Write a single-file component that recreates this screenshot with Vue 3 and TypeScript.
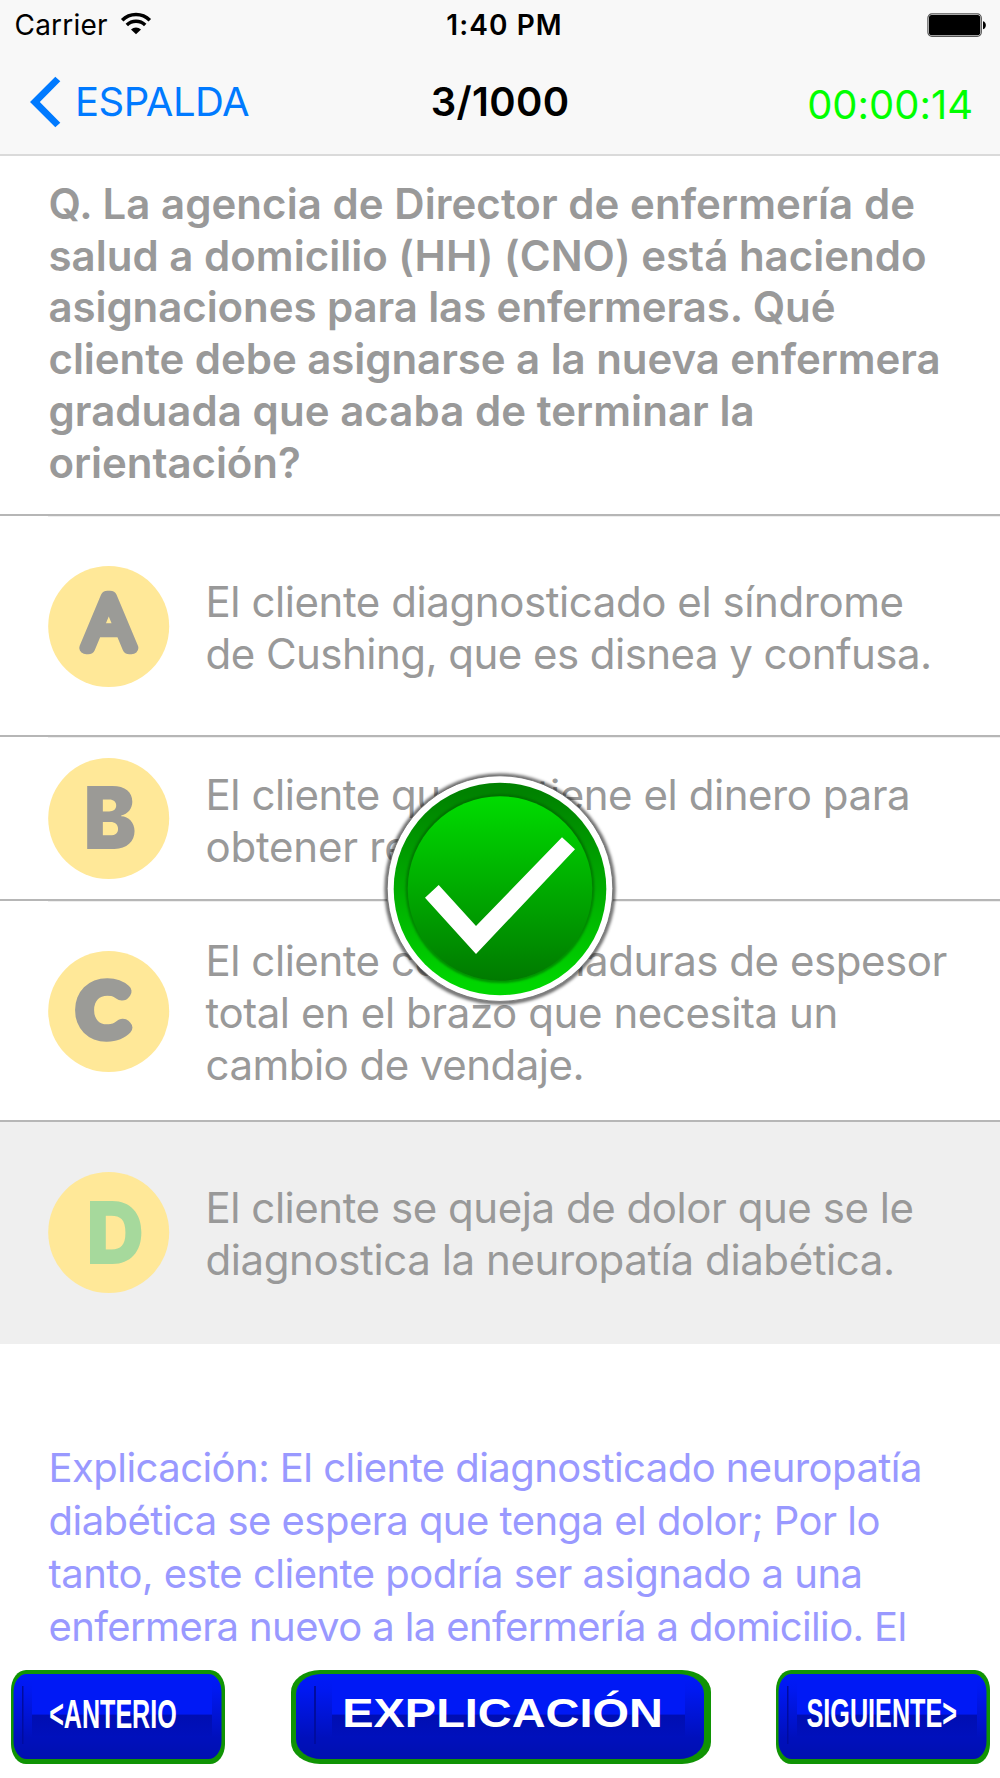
<script setup lang="ts">
import type { Directive } from 'vue'

interface Line {
  text: string
  width: number
}
interface Option {
  letter: string
  lines: Line[]
}

const question: Line[] = [
  { text: 'Q. La agencia de Director de enfermería de', width: 864.5 },
  { text: 'salud a domicilio (HH) (CNO) está haciendo', width: 874.5 },
  { text: 'asignaciones para las enfermeras. Qué', width: 786 },
  { text: 'cliente debe asignarse a la nueva enfermera', width: 889 },
  { text: 'graduada que acaba de terminar la', width: 703 },
  { text: 'orientación?', width: 249.5 },
]

const options: Option[] = [
  {
    letter: 'A',
    lines: [
      { text: 'El cliente diagnosticado el síndrome', width: 694 },
      { text: 'de Cushing, que es disnea y confusa.', width: 721.5 },
    ],
  },
  {
    letter: 'B',
    lines: [
      { text: 'El cliente que no tiene el dinero para', width: 699.5 },
      { text: 'obtener recetas.', width: 317 },
    ],
  },
  {
    letter: 'C',
    lines: [
      { text: 'El cliente con quemaduras de espesor', width: 738 },
      { text: 'total en el brazo que necesita un', width: 630 },
      { text: 'cambio de vendaje.', width: 374 },
    ],
  },
  {
    letter: 'D',
    lines: [
      { text: 'El cliente se queja de dolor que se le', width: 704 },
      { text: 'diagnostica la neuropatía diabética.', width: 684.5 },
    ],
  },
]

const explanation: Line[] = [
  { text: 'Explicación: El cliente diagnosticado neuropatía', width: 868.5 },
  { text: 'diabética se espera que tenga el dolor; Por lo', width: 828 },
  { text: 'tanto, este cliente podría ser asignado a una', width: 812 },
  { text: 'enfermera nuevo a la enfermería a domicilio. El', width: 854 },
]

// Tracks a line of text so that its ink spans the given width.
const vFit: Directive<HTMLElement, number> = {
  mounted(el, { value }) {
    const ctx = document.createElement('canvas').getContext('2d')
    if (!ctx) return
    const s = getComputedStyle(el)
    ctx.font = `${s.fontWeight} ${s.fontSize} ${s.fontFamily}`
    const text = el.textContent ?? ''
    const m = ctx.measureText(text)
    const ink = m.actualBoundingBoxRight + m.actualBoundingBoxLeft
    const spacing = (value - ink) / (text.length - 1)
    el.style.letterSpacing = `${spacing}px`
    el.style.marginRight = `${-spacing}px`
  },
}
</script>

<template>
  <div class="screen">
    <header class="top">
      <div class="status">
        <div class="carrier">
          <span v-fit="91.5">Carrier</span>
          <svg width="30" height="22" viewBox="0 0 30 22">
            <path d="M1.2 7.2A19.5 19.5 0 0 1 28.8 7.2" fill="none" stroke="#000" stroke-width="3.6" />
            <path d="M5.8 12A13 13 0 0 1 24.2 12" fill="none" stroke="#000" stroke-width="3.4" />
            <path d="M15 21.3L10 16.4A7.2 7.2 0 0 1 20 16.4Z" />
          </svg>
        </div>
        <span v-fit="112.5" class="clock">1:40 PM</span>
        <svg class="battery" width="60" height="25" viewBox="0 0 60 25">
          <rect x="0.9" y="0.9" width="53.4" height="22.4" rx="4" fill="#fff" stroke="#555" stroke-width="1.2" />
          <rect x="2" y="2" width="51.2" height="20.2" rx="2.6" />
          <path d="M56 8.2C59.8 9 59.8 15.4 56 16.2Z" />
        </svg>
      </div>
      <nav class="nav">
        <div class="back">
          <svg width="31" height="52" viewBox="0 0 31 52">
            <path d="M25.3 0.7L30.3 5.3L9.8 26L30.3 46.7L25.3 51.3L0 26Z" fill="#007aff" />
          </svg>
          <span v-fit="171">ESPALDA</span>
        </div>
        <span v-fit="135" class="title">3/1000</span>
        <span class="timer"><span v-fit="162">00:00:14</span></span>
      </nav>
    </header>

    <section class="question">
      <div v-for="l in question" :key="l.text" class="line"><span v-fit="l.width">{{ l.text }}</span></div>
    </section>

    <main class="options">
      <div v-for="o in options" :key="o.letter" class="option" :class="'opt-' + o.letter.toLowerCase()">
        <div class="badge">
          <svg width="121" height="121" viewBox="0 0 121 121">
            <circle cx="60.7" cy="60.5" r="60.5" fill="#ffe898" />
            <text v-if="o.letter === 'A'" class="round" text-anchor="middle" transform="translate(60.7 82) scale(1.12 1)">A</text>
            <text v-else-if="o.letter === 'C'" class="round open" text-anchor="middle" transform="translate(54.8 82.5) scale(1.09 1.03)">C</text>
            <text v-else-if="o.letter === 'B'" class="block" transform="translate(35.5 91) scale(.91 1)">B</text>
            <text v-else class="block green" transform="translate(38.3 92) scale(.92 1)">D</text>
          </svg>
        </div>
        <div class="answer">
          <div v-for="l in o.lines" :key="l.text" class="line"><span v-fit="l.width">{{ l.text }}</span></div>
        </div>
      </div>
      <svg class="check" width="240" height="240" viewBox="0 0 240 240">
        <defs>
          <linearGradient id="ring" x1="0" y1="0" x2="0" y2="1">
            <stop offset="0.05" stop-color="#008200" />
            <stop offset="0.95" stop-color="#00d600" />
          </linearGradient>
          <linearGradient id="disc" x1="0" y1="0" x2="0" y2="1">
            <stop offset="0" stop-color="#00dc00" />
            <stop offset="1" stop-color="#007a00" />
          </linearGradient>
          <filter id="soft" x="-10%" y="-10%" width="120%" height="120%">
            <feGaussianBlur stdDeviation="1.6" />
          </filter>
          <filter id="edge" x="-10%" y="-10%" width="120%" height="120%">
            <feGaussianBlur stdDeviation="0.9" />
          </filter>
        </defs>
        <circle cx="120" cy="120" r="113.5" fill="none" stroke="#000" stroke-opacity="0.6" stroke-width="4" filter="url(#soft)" />
        <circle cx="120" cy="119.6" r="112.8" fill="#fff" stroke="#666" stroke-width="0.8" />
        <circle cx="120" cy="120" r="106.3" fill="url(#ring)" />
        <circle cx="120" cy="119.5" r="92.8" fill="none" stroke="#005c00" stroke-opacity="0.6" stroke-width="3" filter="url(#edge)" />
        <circle cx="120" cy="119.5" r="92.2" fill="url(#disc)" />
        <path d="M45 128.7L58.7 116L96 157L182 68.3L195 80.3L96 185Z" fill="#fff" />
      </svg>
    </main>

    <section class="explanation">
      <div v-for="l in explanation" :key="l.text" class="line"><span v-fit="l.width">{{ l.text }}</span></div>
    </section>

    <footer class="actions">
      <svg width="0" height="0" class="defs">
        <linearGradient id="face" x1="0" y1="0" x2="0" y2="1">
          <stop offset="0" stop-color="#001af8" />
          <stop offset="0.2" stop-color="#0018f0" />
          <stop offset="0.75" stop-color="#0010bc" />
          <stop offset="1" stop-color="#0010b0" />
        </linearGradient>
        <linearGradient id="low" x1="0" y1="0" x2="0" y2="1">
          <stop offset="0" stop-color="#000eb2" />
          <stop offset="1" stop-color="#0010bc" />
        </linearGradient>
      </svg>
      <svg class="btn" width="214" height="94" viewBox="0 0 214 94">
        <rect width="214" height="94" rx="15" ry="20" fill="#109404" />
        <rect x="2.5" y="4" width="208" height="85" rx="13" ry="18" fill="url(#face)" />
        <rect x="21" y="10" width="180" height="34.7" fill="#0019f5" />
        <rect x="21" y="44.7" width="180" height="22" fill="url(#low)" />
        <rect x="11" y="16" width="1.5" height="58" fill="#000ca0" />
        <text x="38.2" y="57.5" textLength="127.5" lengthAdjust="spacingAndGlyphs">&lt;ANTERIO</text>
      </svg>
      <svg class="btn" width="420" height="94" viewBox="0 0 420 94">
        <rect width="420" height="94" rx="29" ry="22" fill="#109404" />
        <rect x="5" y="4" width="408" height="85" rx="25" ry="20" fill="url(#face)" />
        <rect x="41" y="10" width="353" height="34.7" fill="#0019f5" />
        <rect x="41" y="44.7" width="353" height="22" fill="url(#low)" />
        <rect x="23" y="16" width="2" height="58" fill="#000ca0" />
        <text x="51.3" y="56.5" textLength="320.5" lengthAdjust="spacingAndGlyphs">EXPLICACIÓN</text>
      </svg>
      <svg class="btn" width="214" height="94" viewBox="0 0 214 94">
        <rect width="214" height="94" rx="15" ry="20" fill="#109404" />
        <rect x="2.5" y="4" width="208" height="85" rx="13" ry="18" fill="url(#face)" />
        <rect x="21" y="10" width="180" height="34.7" fill="#0019f5" />
        <rect x="21" y="44.7" width="180" height="22" fill="url(#low)" />
        <rect x="11" y="16" width="1.5" height="58" fill="#000ca0" />
        <text transform="translate(30.5 57.3) scale(.66 1)" textLength="228" lengthAdjust="spacingAndGlyphs">SIGUIENTE&gt;</text>
      </svg>
    </footer>
  </div>
</template>

<style>
body {
  margin: 0;
  background: #fff;
}
</style>

<style scoped>
.screen {
  width: 1000px;
  height: 1778px;
  overflow: hidden;
  background: #fff;
  font-family: Inter, "Liberation Sans", sans-serif;
  display: flex;
  flex-direction: column;
}
svg {
  display: block;
  flex: none;
  overflow: visible;
}
.top {
  height: 154px;
  flex: none;
  background: #f8f8f8;
  border-bottom: 2px solid #dadada;
}
.status,
.nav {
  display: grid;
  grid-template-columns: 1fr auto 1fr;
}
.status {
  height: 50px;
  font-size: 28px;
  line-height: 51px;
}
.carrier {
  display: flex;
  padding-left: 14.5px;
}
.carrier svg {
  margin: 13px 0 0 13.5px;
}
.clock {
  font-weight: 600;
  padding-left: 8px;
}
.battery {
  justify-self: end;
  margin: 13px 13px 0 0;
}
.nav {
  height: 104px;
  font-size: 40px;
  line-height: 104px;
}
.back {
  display: flex;
  color: #007aff;
  padding-left: 30px;
}
.back svg {
  margin: 26px 14px 0 0;
}
.title {
  font-weight: 600;
}
.timer {
  justify-self: end;
  color: #0f0;
  padding: 3px 27px 0 0;
}
.line {
  white-space: nowrap;
}
.question {
  height: 336px;
  flex: none;
  padding: 22px 0 0 48.5px;
  border-bottom: 2px solid #b6b6b6;
  font-size: 42px;
  line-height: 51.7px;
  font-weight: 600;
  color: #999;
}
.options {
  position: relative;
  flex: none;
}
.option {
  display: flex;
  box-sizing: border-box;
  height: 221px;
  padding-left: 48px;
  background: linear-gradient(#eee, #eee) 48px 0 / 100% 1px no-repeat;
  border-bottom: 2px solid #b6b6b6;
  font-size: 42px;
  line-height: 52px;
  color: #999;
}
.badge {
  width: 121px;
  height: 121px;
  margin: 50px 36.5px 0 0;
}
.answer {
  padding-top: 60px;
}
.opt-b {
  height: 164px;
}
.opt-b .badge {
  margin-top: 21px;
}
.opt-b .answer {
  padding-top: 32px;
}
.opt-c .answer {
  padding-top: 34px;
}
.opt-d {
  height: 222px;
  background: #efefef;
  border-bottom: 0;
}
.round {
  font: 100 70px Inter, sans-serif;
  fill: #9b9b97;
  stroke: #9b9b97;
  stroke-width: 12.5px;
  stroke-linejoin: round;
}
.open {
  font: 300 66px Lato, sans-serif;
  stroke-width: 14px;
}
.block {
  font: 900 87px Inter, sans-serif;
  fill: #9b9a96;
}
.green {
  fill: #a6d99c;
}
.check {
  position: absolute;
  left: 380px;
  top: 253px;
}
.explanation {
  flex: none;
  height: 229px;
  padding: 97px 0 0 48.5px;
  font-size: 40px;
  line-height: 53px;
  color: #9999ff;
}
.actions {
  display: flex;
  justify-content: space-between;
  padding: 0 10px 0 11px;
}
.defs {
  position: absolute;
}
.btn text {
  font: bold 40px "Liberation Sans", sans-serif;
  fill: #fff;
}
</style>
